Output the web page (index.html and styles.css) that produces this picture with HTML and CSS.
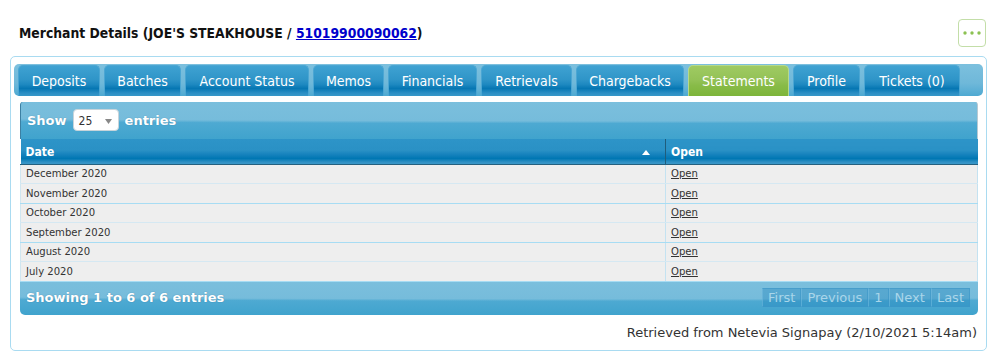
FILE: index.html
```html
<!DOCTYPE html>
<html>
<head>
<meta charset="utf-8">
<link rel="stylesheet" href="styles.css">
</head>
<body>
<div class="page">
  <div class="header">
    <h1 class="title">Merchant Details (JOE'S STEAKHOUSE / <a href="#" class="mid">51019900090062</a>)</h1>
    <button class="more" type="button" aria-label="More">
      <svg width="20" height="6" viewBox="0 0 20 6"><circle cx="3" cy="3" r="1.7" fill="#8cc152"/><circle cx="10" cy="3" r="1.7" fill="#8cc152"/><circle cx="17" cy="3" r="1.7" fill="#8cc152"/></svg>
    </button>
  </div>
  <div class="panel">
    <ul class="tabs">
      <li class="tab">Deposits</li>
      <li class="tab">Batches</li>
      <li class="tab">Account Status</li>
      <li class="tab">Memos</li>
      <li class="tab">Financials</li>
      <li class="tab">Retrievals</li>
      <li class="tab">Chargebacks</li>
      <li class="tab active">Statements</li>
      <li class="tab">Profile</li>
      <li class="tab">Tickets (0)</li>
    </ul>
    <div class="grid">
      <div class="toolbar">
        <span class="lbl">Show</span>
        <span class="select"><span>25</span><svg width="7" height="5" viewBox="0 0 7 5"><path d="M0 0 L7 0 L3.5 5 Z" fill="#888"/></svg></span>
        <span class="lbl">entries</span>
      </div>
      <table class="tbl">
        <thead>
          <tr>
            <th class="c-date">Date<svg class="sort" width="8" height="5" viewBox="0 0 8 5"><path d="M0 5 L4 0 L8 5 Z" fill="#fff"/></svg></th>
            <th class="c-open">Open</th>
          </tr>
        </thead>
        <tbody>
          <tr><td>December 2020</td><td><a href="#">Open</a></td></tr>
          <tr><td>November 2020</td><td><a href="#">Open</a></td></tr>
          <tr><td>October 2020</td><td><a href="#">Open</a></td></tr>
          <tr><td>September 2020</td><td><a href="#">Open</a></td></tr>
          <tr><td>August 2020</td><td><a href="#">Open</a></td></tr>
          <tr><td>July 2020</td><td><a href="#">Open</a></td></tr>
        </tbody>
      </table>
      <div class="footer">
        <span class="info">Showing 1 to 6 of 6 entries</span>
        <div class="pager">
          <span class="pb">First</span><span class="pb">Previous</span><span class="pb">1</span><span class="pb">Next</span><span class="pb">Last</span>
        </div>
      </div>
    </div>
    <div class="retrieved">Retrieved from Netevia Signapay (2/10/2021 5:14am)</div>
  </div>
</div>
</body>
</html>
```
FILE: styles.css
```css
* { box-sizing: border-box; }
html, body { margin: 0; padding: 0; background: #fff; }
body { font-family: "DejaVu Sans Condensed", "DejaVu Sans", sans-serif; color: #222; }
.page { width: 1000px; padding: 19px 13px 0 10px; }
.header { display: flex; align-items: center; justify-content: space-between; height: 28px; margin-bottom: 9px; }
.title { margin: 0 0 0 9px; font-size: 13.8px; font-weight: bold; color: #111; }
.mid { color: #0000cc; text-decoration: underline; }
.more { width: 28px; height: 28px; margin-right: 1px; border: 1px solid #c3dea8; border-radius: 4px; background: #fff; display: flex; align-items: center; justify-content: center; padding: 0; }
.panel { border: 1px solid #a9dbf1; border-radius: 5px; padding: 7px 3px 8px 3px; height: 295px; }
.tabs { list-style: none; margin: 0; padding: 1px 4px 0 4px; display: flex; gap: 4px; height: 32px; border-radius: 5px; background: linear-gradient(#7cc0de, #6fb8d9 60%, #4ea9d2); }
.tab { height: 31px; display: flex; align-items: center; justify-content: center; padding-bottom: 1px; font-size: 14px; color: #fff; border: 1px solid #4ba6d3; border-bottom: none; border-radius: 5px 5px 0 0; background: linear-gradient(#3fa2d2 0%, #2f95c8 45%, #1d88c0 62%, #0677b3 75%, #2b8ec4 90%, #3798c9 100%); }
.tab:nth-child(1) { width: 82px; }
.tab:nth-child(2) { width: 77px; }
.tab:nth-child(3) { width: 124px; }
.tab:nth-child(4) { width: 71px; }
.tab:nth-child(5) { width: 89px; }
.tab:nth-child(6) { width: 91px; }
.tab:nth-child(7) { width: 108px; }
.tab:nth-child(8) { width: 101px; }
.tab:nth-child(9) { width: 67px; }
.tab:nth-child(10) { width: 96px; }
.tab.active { border-color: #b6d98a; background: linear-gradient(#9fca62 0%, #94c257 45%, #88bb48 65%, #7db53a 100%); }
.grid { margin: 6px 5px 0 6px; }
.toolbar { height: 37px; display: flex; align-items: center; gap: 6px; padding-left: 6px; padding-bottom: 1px; border-left: 1px solid #3c80a3; border-right: 1px solid #b7c9d2; border-radius: 3px 3px 0 0;
  background: radial-gradient(ellipse 150% 58% at 60% 0%, #7bbfdd 0%, #76bcdb 88%, rgba(118,188,219,0) 100%), linear-gradient(#5fb2d8, #40a3cd); }
.lbl { font-family: "DejaVu Sans", sans-serif; font-size: 13px; font-weight: bold; color: #fff; text-shadow: 0 0 1px rgba(0,60,100,.4); }
.select { width: 46px; height: 22px; background: #fff; border: 1px solid #c8d4da; border-radius: 4px; display: flex; align-items: center; justify-content: space-between; padding: 2px 6px 0 5px; font-size: 12px; color: #333; }
.tbl { width: 100%; border-collapse: collapse; font-size: 11.2px; }
.tbl th { height: 25px; text-align: left; color: #fff; font-size: 12px; font-weight: bold; padding: 1px 0 0 5px; border-bottom: 1px solid #24607f; background: linear-gradient(#2d94c8 0%, #2a91c5 45%, #1682bd 62%, #0077b3 78%, #2e8fc3 92%, #3a98c9 100%); }
.tbl th.c-date { width: 645px; position: relative; border-right: 1px solid #1f5d7c; }
.sort { position: absolute; right: 15px; top: 11px; }
.tbl td { height: 19.5px; background: #eeeeee; color: #333; padding: 0 0 0 5px; border-bottom: 1px solid #a7dcf3; }
.tbl tbody tr:nth-child(odd) td { border-bottom-color: #d5e8f2; }
.tbl td:first-child { border-right: 1px solid #c4e2f1; border-left: 1px solid #d0e6f0; }
.tbl td:last-child { border-right: 1px solid #c4e2f1; }
.tbl a { color: #333; text-decoration: underline; }
.footer { height: 33px; display: flex; align-items: center; justify-content: space-between; padding: 0 8px 1px 6px; border-radius: 0 0 5px 5px;
  background: radial-gradient(ellipse 150% 58% at 60% 0%, #7bbfdd 0%, #76bcdb 88%, rgba(118,188,219,0) 100%), linear-gradient(#5fb2d8, #40a3cd); }
.info { font-family: "DejaVu Sans", sans-serif; font-size: 13px; font-weight: bold; color: #fff; text-shadow: 0 0 1px rgba(0,60,100,.5); }
.pager { display: flex; height: 19px; }
.pb { font-family: "DejaVu Sans", sans-serif; display: flex; align-items: center; padding: 0 5px; font-size: 13px; color: #a9d6ea; background: rgba(30,130,185,0.35); border: 1px solid rgba(60,150,200,0.6); border-left: 1px solid rgba(120,190,225,0.5); }
.retrieved { font-family: "DejaVu Sans", sans-serif; text-align: right; font-size: 13px; color: #333; padding: 10px 6px 0 0; }
```
